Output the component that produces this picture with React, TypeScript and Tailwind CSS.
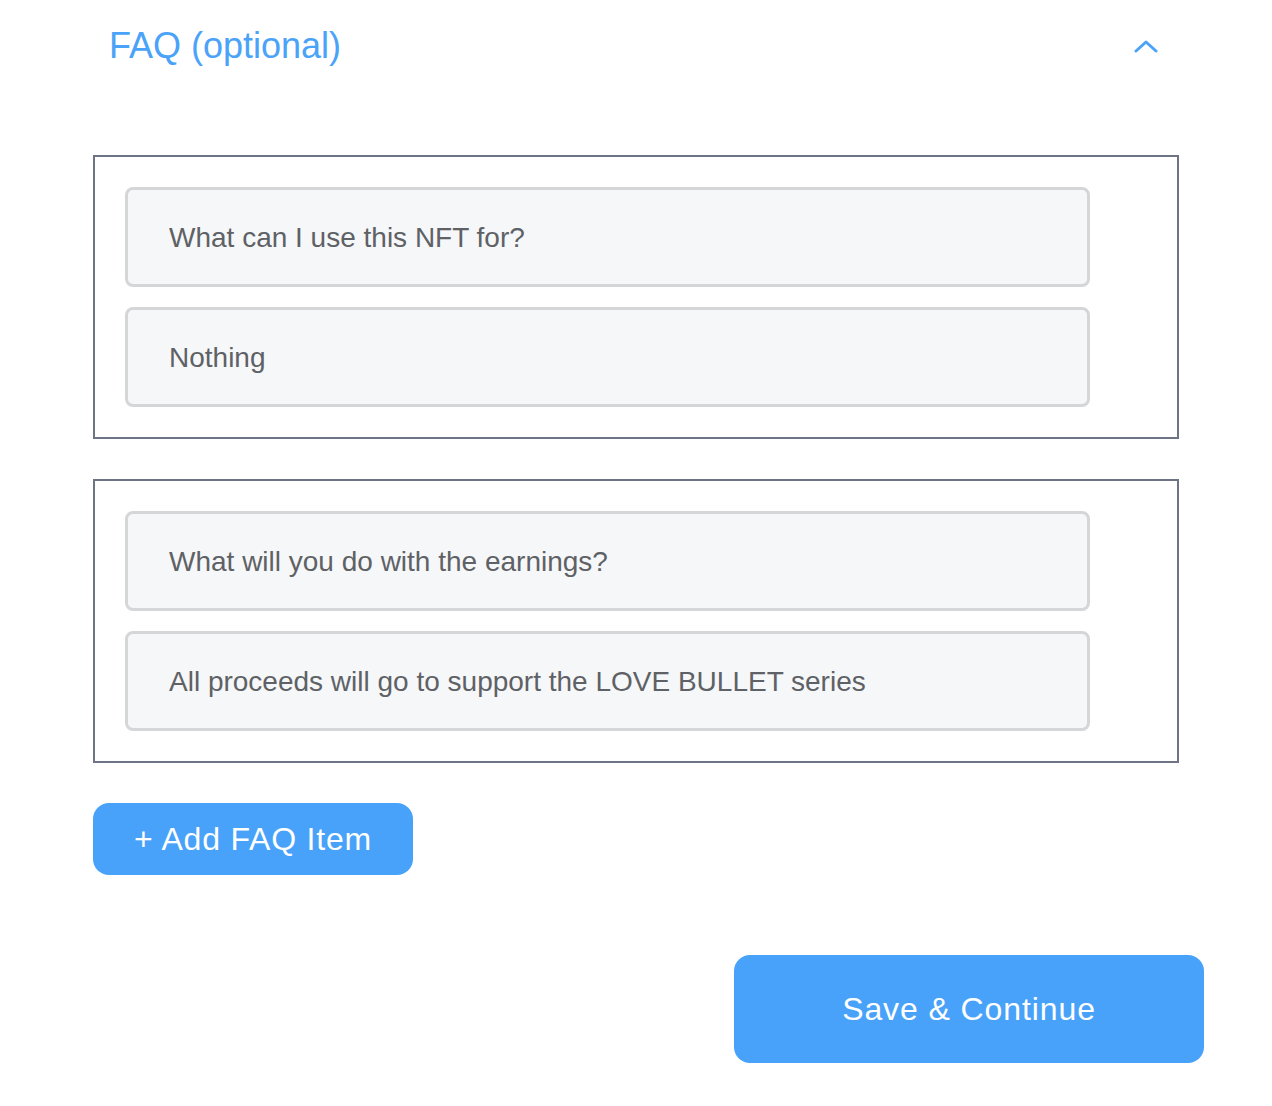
import React from 'react';

type FaqItem = { question: string; answer: string };

const faqItems: FaqItem[] = [
  { question: 'What can I use this NFT for?', answer: 'Nothing' },
  { question: 'What will you do with the earnings?', answer: 'All proceeds will go to support the LOVE BULLET series' },
];

const Field: React.FC<{ value: string }> = ({ value }) => (
  <input
    type="text"
    readOnly
    value={value}
    className="block w-[965px] h-[100px] rounded-[8px] border-[3px] border-[#d5d6d8] bg-[#f6f7f9] pl-[41px] pt-[2px] text-[28px] text-[#5e6165] outline-none"
  />
);

export default function App() {
  return (
    <div className="w-[1272px] min-h-[1106px] bg-white font-['Liberation_Sans',Arial,sans-serif]">
      <div className="px-[93px]">
        {/* Header */}
        <div className="flex h-[92px] items-center justify-between pl-[16px] pr-[21px]">
          <h2 className="text-[36px] leading-none text-[#4aa3f8]">FAQ (optional)</h2>
          <svg width="24" height="14" viewBox="0 0 24 14" fill="none">
            <polyline points="2,12 12,3 22,12" stroke="#4aa3f8" strokeWidth="3" strokeLinecap="round" strokeLinejoin="round" />
          </svg>
        </div>

        {/* FAQ items */}
        <div className="mt-[63px] flex flex-col gap-[40px]">
          {faqItems.map((item) => (
            <div key={item.question} className="flex flex-col gap-[20px] border-2 border-[#6f7485] p-[30px]">
              <Field value={item.question} />
              <Field value={item.answer} />
            </div>
          ))}
        </div>

        <button className="mt-[40px] h-[72px] w-[320px] rounded-[16px] bg-[#48a2f9] text-[32px] tracking-[0.8px] text-white">
          + Add FAQ Item
        </button>
      </div>

      <div className="mt-[80px] flex justify-end pr-[68px]">
        <button className="h-[108px] w-[470px] rounded-[16px] bg-[#48a2f9] text-[32px] tracking-[0.9px] text-white">
          Save &amp; Continue
        </button>
      </div>
    </div>
  );
}
